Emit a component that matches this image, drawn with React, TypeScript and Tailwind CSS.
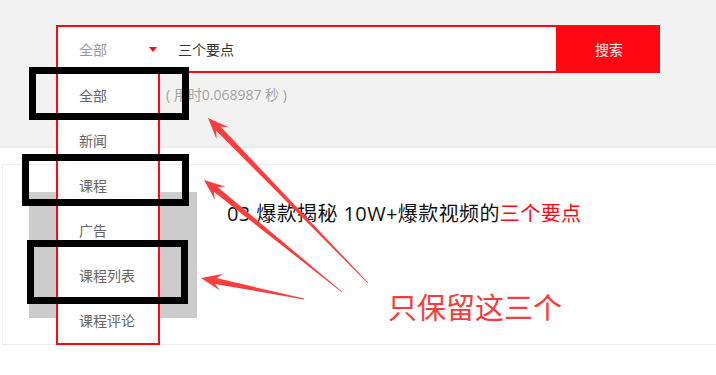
import React from "react";

function arrowPoints(tx: number, ty: number, px: number, py: number) {
  const dx = px - tx;
  const dy = py - ty;
  const L = Math.hypot(dx, dy);
  const ux = dx / L;
  const uy = dy / L;
  const nx = -uy;
  const ny = ux;
  const pt = (s: number, t: number) =>
    `${(tx + ux * s + nx * t).toFixed(2)},${(ty + uy * s + ny * t).toFixed(2)}`;
  return [
    pt(0, 0.4),
    pt(L - 15, 3),
    pt(L - 21, 8.5),
    pt(L, 0),
    pt(L - 21, -8.5),
    pt(L - 15, -3),
    pt(0, -0.4),
  ].join(" ");
}

const arrows = [
  { tx: 368, ty: 283, px: 208, py: 118 },
  { tx: 342, ty: 292, px: 204, py: 180 },
  { tx: 304, ty: 299, px: 201, py: 278 },
];

export default function App() {
  const items = ["全部", "新闻", "课程", "广告", "课程列表", "课程评论"];
  return (
    <div className="relative w-[716px] h-[375px] overflow-hidden bg-white font-['Noto_Sans_CJK_SC','Microsoft_YaHei',sans-serif]">
      {/* header */}
      <div className="h-[148px] bg-[#f2f2f2] border-b-2 border-[#ebebeb] pt-[25px] pl-[56px]">
        <div className="flex">
          <div className="w-[502px] h-[48px] border-2 border-[#ff0813] bg-white flex items-center">
            <div className="w-[120px] flex items-center justify-between pl-[21px] pr-[21px]">
              <span className="text-[14px] leading-5 text-[#999]">全部</span>
              <span className="w-0 h-0 border-x-4 border-x-transparent border-t-[5px] border-t-[#ff0813]" />
            </div>
            <span className="text-[14px] leading-5 text-[#333]">三个要点</span>
          </div>
          <div className="w-[102px] h-[48px] bg-[#ff0813] flex items-center justify-center text-[14px] text-white">
            搜索
          </div>
        </div>
        <div className="mt-[12px] pl-[110px] text-[14px] leading-5 text-[#a3a3a3] font-['Open_Sans','Noto_Sans_CJK_SC',sans-serif]">
          ( 用时0.068987 秒 )
        </div>
      </div>

      {/* result card */}
      <div className="mt-[16px] ml-[2px] w-[740px] h-[181px] border border-[#eeeeee] flex">
        <div className="ml-[26px] mt-[27px] w-[168px] h-[126px] bg-[#cccccc]" />
        <div className="ml-[30px] mt-[35px] text-[20px] leading-7 tracking-[0.4px] text-[#111] font-['Open_Sans','Noto_Sans_CJK_SC',sans-serif]">
          03 爆款揭秘 10W+爆款视频的<span className="text-[#ff0813]">三个要点</span>
        </div>
      </div>

      {/* dropdown */}
      <div className="absolute left-[56px] top-[73px] w-[104px] h-[272px] bg-white border-x-2 border-b-2 border-[#ff0813]">
        {items.map((t) => (
          <div key={t} className="h-[45px] flex items-center pl-[21px] text-[14px] text-[#666]">
            {t}
          </div>
        ))}
      </div>

      {/* annotation boxes */}
      <div className="absolute left-[29px] top-[67px] w-[160px] h-[53px] border-[7px] border-black" />
      <div className="absolute left-[22px] top-[154px] w-[167px] h-[52px] border-[7px] border-black" />
      <div className="absolute left-[27px] top-[240px] w-[161px] h-[64px] border-[7px] border-black" />

      {/* arrows */}
      <svg className="absolute left-0 top-0 pointer-events-none" width="716" height="375">
        {arrows.map((a, i) => (
          <polygon key={i} points={arrowPoints(a.tx, a.ty, a.px, a.py)} fill="#fb3d3d" />
        ))}
      </svg>

      <div className="absolute left-[388px] top-[292px] text-[29px] leading-none text-[#f83c3c]">
        只保留这三个
      </div>
    </div>
  );
}
